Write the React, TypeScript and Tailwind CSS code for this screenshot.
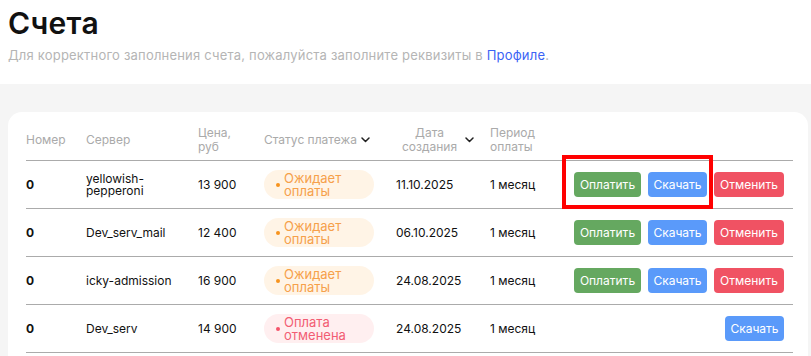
const rows = [
  { server: "yellowish-pepperoni", price: "13 900", status: "wait", date: "11.10.2025" },
  { server: "Dev_serv_mail", price: "12 400", status: "wait", date: "06.10.2025" },
  { server: "icky-admission", price: "16 900", status: "wait", date: "24.08.2025" },
  { server: "Dev_serv", price: "14 900", status: "cancel", date: "24.08.2025" },
]

const Chevron = () => (
  <svg width="9" height="6" viewBox="0 0 9 6" fill="none" className="ml-[4px] shrink-0">
    <path d="M1 1l3.5 3.5L8 1" stroke="#222" strokeWidth="1.5" strokeLinecap="round" strokeLinejoin="round" />
  </svg>
)

const Status = ({ type }: { type: string }) =>
  type === "wait" ? (
    <div className="flex h-[29px] w-[110px] items-center rounded-full bg-[#fff4e6] pl-[12px]">
      <span className="mr-[4px] h-[4px] w-[4px] shrink-0 rounded-full bg-[#f7931e]" />
      <span className="w-[80px] text-[13px] leading-[13px] text-[#f6a04a]">Ожидает оплаты</span>
    </div>
  ) : (
    <div className="flex h-[29px] w-[110px] items-center rounded-full bg-[#ffeff0] pl-[12px]">
      <span className="mr-[4px] h-[4px] w-[4px] shrink-0 rounded-full bg-[#f5546b]" />
      <span className="w-[80px] text-[13px] leading-[13px] text-[#f25d73]">Оплата отменена</span>
    </div>
  )

const Btn = ({ label, color }: { label: string; color: string }) => (
  <button className={`h-[25px] shrink-0 rounded-[4px] text-[12px] text-white ${color}`}>{label}</button>
)

export default function App() {
  return (
    <div className="relative h-[356px] w-[811px] overflow-hidden bg-white font-['Inter',sans-serif] text-[#111]">
      <div className="px-[8px] pt-[4px]">
        <h1 className="text-[30px] font-semibold leading-[38px] tracking-[0.3px]">Счета</h1>
        <p className="mt-[4px] text-[13px] leading-[18px] tracking-[0.2px] text-[#b5b5b5]">
          Для корректного заполнения счета, пожалуйста заполните реквизиты в{" "}
          <span className="text-[#3b63f5]">Профиле</span>.
        </p>
      </div>
      <div className="mt-[20px] h-[300px] bg-[#f5f5f5] pl-[8px] pr-[3px] pt-[28px]">
        <div className="h-[300px] rounded-[14px] bg-white pl-[18px] pr-[15px]">
          <div className="flex h-[49px] items-center border-b border-[#ababab] pt-[8px] text-[12px] leading-[14px] text-[#aaaaaa]">
            <div className="w-[60px] shrink-0">Номер</div>
            <div className="w-[112px] shrink-0">Сервер</div>
            <div className="w-[66px] shrink-0">Цена,<br />руб</div>
            <div className="flex w-[132px] shrink-0 items-center">Статус платежа<Chevron /></div>
            <div className="flex w-[94px] shrink-0 items-center">
              <div className="ml-[6px] text-center">Дата<br />создания</div>
              <span className="ml-[4px]"><Chevron /></span>
            </div>
            <div className="w-[80px] shrink-0">Период<br />оплаты</div>
          </div>
          {rows.map((r, i) => (
            <div key={i} className="flex h-[48px] items-center border-b border-[#ababab] text-[12px] leading-[12px]">
              <div className="w-[60px] shrink-0 font-bold">0</div>
              <div className="w-[112px] shrink-0 pr-[14px]">{r.server}</div>
              <div className="w-[66px] shrink-0">{r.price}</div>
              <div className="w-[132px] shrink-0"><Status type={r.status} /></div>
              <div className="w-[94px] shrink-0">{r.date}</div>
              <div className="w-[80px] shrink-0">1 месяц</div>
              <div className="flex flex-1 justify-end gap-[7px] pr-[9px]">
                {r.status === "wait" && <Btn label="Оплатить" color="w-[67px] bg-[#65a860]" />}
                <Btn label="Скачать" color="w-[59px] bg-[#5a9afa]" />
                {r.status === "wait" && <Btn label="Отменить" color="w-[70px] bg-[#f05263]" />}
              </div>
            </div>
          ))}
        </div>
      </div>
      <div className="absolute left-[562px] top-[155px] h-[54px] w-[151px] border-[4px] border-[#ff0000]" />
    </div>
  )
}
